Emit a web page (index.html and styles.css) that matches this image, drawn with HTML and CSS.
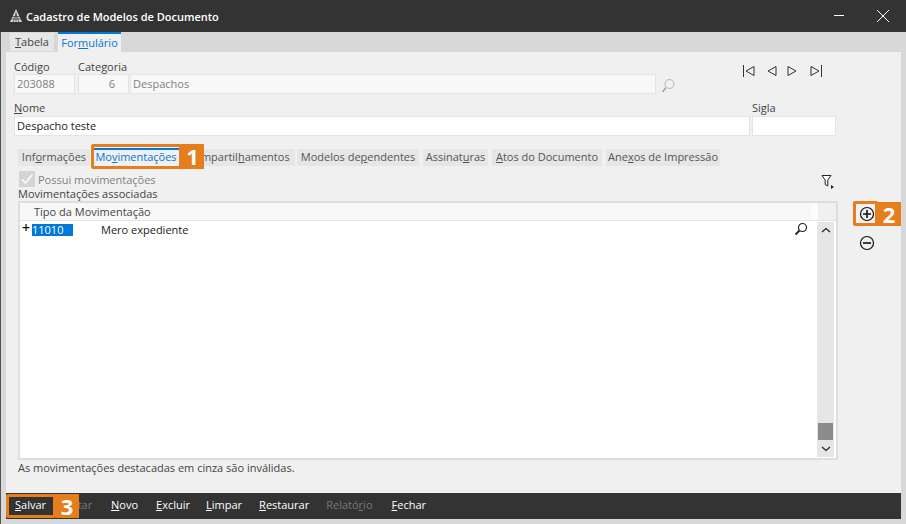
FILE: index.html
```html
<!DOCTYPE html>
<html lang="pt">
<head>
<meta charset="utf-8">
<title>Cadastro de Modelos de Documento</title>
<link rel="stylesheet" href="styles.css">
</head>
<body>
<div class="window">
  <header class="titlebar">
    <svg class="logo" width="16" height="16" viewBox="0 0 16 16"><path d="M8 1 L14 14 H2 Z" fill="#d8d8d8"/><path d="M8 4V14M5 14L8 6L11 14M3 11H13M4 8.500H12" stroke="#333" stroke-width=".7" fill="none"/></svg>
    <span class="title">Cadastro de Modelos de Documento</span>
    <svg class="win-min" width="12" height="12" viewBox="0 0 12 12"><path d="M1 5.500H11" stroke="#fff"/></svg>
    <svg class="win-close" width="14" height="14" viewBox="0 0 14 14"><path d="M1 1L13 13M13 1L1 13" stroke="#fff"/></svg>
  </header>
  <nav class="top-tabs">
    <span class="top-tab"><u>T</u>abela</span>
    <span class="top-tab active">For<u>m</u>ulário</span>
  </nav>
  <main class="panel">
    <div class="row first-row">
      <div class="field f-code"><label>Código</label><div class="input ro">203088</div></div>
      <div class="field f-cat"><label>Categoria</label><div class="input ro num">6</div></div>
      <div class="field f-desc"><label>&nbsp;</label><div class="input ro">Despachos</div></div>
      <svg class="lookup" width="14" height="16" viewBox="0 0 14 16"><circle cx="8.500" cy="6" r="4.500" fill="none" stroke="#b5b5b5"/><path d="M5 9.500L1.500 14" stroke="#a5a5a5" stroke-width="1.500"/></svg>
      <div class="nav-icons">
        <svg width="12" height="12" viewBox="0 0 12 12"><path d="M.5 0V12M11 1.500V10.500L3 6Z" fill="none" stroke="#333"/></svg>
        <svg class="nav-prev" width="10" height="12" viewBox="0 0 10 12"><path d="M9 1.500V10.500L1 6Z" fill="none" stroke="#333"/></svg>
        <svg class="nav-next" width="10" height="12" viewBox="0 0 10 12"><path d="M1 1.500V10.500L9 6Z" fill="none" stroke="#333"/></svg>
        <svg class="nav-last" width="12" height="12" viewBox="0 0 12 12"><path d="M11.500 0V12M1 1.500V10.500L9 6Z" fill="none" stroke="#333"/></svg>
      </div>
    </div>
    <div class="row second-row">
      <div class="field f-name"><label><u>N</u>ome</label><div class="input">Despacho teste</div></div>
      <div class="field f-sigla"><label>Si<u>g</u>la</label><div class="input"></div></div>
    </div>
    <div class="sub-tabs">
      <span class="sub-tab w1">Inf<u>o</u>rmações</span>
      <span class="sub-tab active w2">Mo<u>v</u>imentações</span>
      <span class="sub-tab w3">Compartil<u>h</u>amentos</span>
      <span class="sub-tab w4">Modelos de<u>p</u>endentes</span>
      <span class="sub-tab w5">Assinat<u>u</u>ras</span>
      <span class="sub-tab w6"><u>A</u>tos do Documento</span>
      <span class="sub-tab w7">Ane<u>x</u>os de Impressão</span>
    </div>
    <div class="content">
      <div class="left">
        <div class="check-row">
          <span class="check"><svg width="16" height="16" viewBox="0 0 16 16"><path d="M3 8.500L6.500 12L13 4" fill="none" stroke="#fff" stroke-width="1.500"/></svg></span>
          <span class="check-label">Possui movimentações</span>
          <svg class="filter" width="14" height="16" viewBox="0 0 14 16"><path d="M1 1.500H10L6.800 6V12L4.200 10.500V6Z" fill="#fff" stroke="#222"/><path d="M10 11V15L13 13Z" fill="#222"/></svg>
        </div>
        <div class="section-label">Movimentações associadas</div>
        <div class="grid-box">
          <div class="grid-head"><div class="head-wrap"><div class="head-title">Tipo da Movimentação</div></div></div>
          <div class="grid-body">
            <div class="grid-rows">
              <div class="grid-row">
                <span class="plus">+</span>
                <span class="cell-code">11010</span>
                <span class="cell-name">Mero expediente</span>
                <svg class="row-search" width="14" height="14" viewBox="0 0 14 14"><circle cx="8.500" cy="5.500" r="4" fill="none" stroke="#222" stroke-width="1.200"/><path d="M5.500 8.500L1.500 12.500" stroke="#222" stroke-width="1.800"/></svg>
              </div>
            </div>
            <div class="scrollbar">
              <svg width="16" height="16" viewBox="0 0 16 16"><path d="M4 10L8 6.500L12 10" fill="none" stroke="#222" stroke-width="1.200"/></svg>
              <div class="track"></div>
              <div class="thumb"></div>
              <svg width="16" height="16" viewBox="0 0 16 16"><path d="M4 6L8 9.500L12 6" fill="none" stroke="#222" stroke-width="1.200"/></svg>
            </div>
          </div>
        </div>
        <p class="note">As movimentações destacadas em cinza são inválidas.</p>
      </div>
      <aside class="side">
        <svg width="16" height="16" viewBox="0 0 16 16"><circle cx="8" cy="8" r="6.500" fill="none" stroke="#111" stroke-width="1.200"/><path d="M4 8H12M8 4V12" stroke="#111" stroke-width="1.600"/></svg>
        <svg class="side-minus" width="16" height="16" viewBox="0 0 16 16"><circle cx="8" cy="8" r="6.500" fill="none" stroke="#111" stroke-width="1.200"/><path d="M4 8H12" stroke="#111" stroke-width="1.600"/></svg>
      </aside>
    </div>
    <div class="mark mark-tab"></div><div class="badge badge-tab">1</div>
    <div class="mark mark-add"></div><div class="badge badge-add">2</div>
  </main>
  <footer class="toolbar">
    <span class="tool w-salvar"><u>S</u>alvar</span>
    <span class="tool disabled w-editar">Editar</span>
    <span class="tool w-novo"><u>N</u>ovo</span>
    <span class="tool w-excluir"><u>E</u>xcluir</span>
    <span class="tool"><u>L</u>impar</span>
    <span class="tool"><u>R</u>estaurar</span>
    <span class="tool disabled w-relatorio">Relató<u>r</u>io</span>
    <span class="tool"><u>F</u>echar</span>
    <div class="mark mark-save"></div><div class="badge badge-save">3</div>
  </footer>
</div>
</body>
</html>
```
FILE: styles.css
```css
* { box-sizing: border-box; }
html, body { margin: 0; padding: 0; }
body { width: 906px; height: 524px; overflow: hidden; background: #d8d8d8; font-family: "Open Sans", "Noto Sans", sans-serif; font-size: 11px; color: #333; }
u { text-underline-offset: 1px; }
.window { display: flex; flex-direction: column; height: 524px; border-left: 1px solid #555; }

.titlebar { height: 32px; margin-left: -1px; background: #333; color: #fff; display: flex; align-items: center; padding-left: 8px; }
.logo { flex: none; }
.title { margin-left: 2px; font-weight: 600; font-size: 11px; flex: 1; }
.win-min { margin-right: 31px; }
.win-close { margin-right: 16px; }

.top-tabs { height: 20px; display: flex; align-items: flex-end; padding-left: 9px; gap: 4px; }
.top-tab { width: 44px; height: 18px; margin-bottom: 1px; background: #e6e6e6; text-align: center; line-height: 18px; color: #444; }
.top-tab.active { width: 63px; height: 20px; margin-bottom: 0; background: #f0f0f0; border-top: 2px solid #0078d7; color: #0078d7; line-height: 17px; }

.panel { position: relative; height: 441px; margin: 0 5px 0 5px; background: #f0f0f0; padding: 0 0 0 8px; }
.row { display: flex; }
.first-row { height: 42px; padding-top: 7px; }
.second-row { height: 42px; padding-top: 6px; gap: 2px; }
.field { display: flex; flex-direction: column; }
.field label { height: 15px; line-height: 16px; color: #444; }
.second-row .field label { height: 16px; line-height: 15px; }
.input { height: 20px; background: #fff; border: 1px solid #e4e4e4; padding: 0 2px; line-height: 18px; color: #222; white-space: nowrap; }
.input.ro { background: #f8f8f8; color: #808080; }
.input.num { text-align: right; padding-right: 13px; }
.f-code { width: 61px; margin-right: 3px; }
.f-cat { width: 51px; margin-right: 1px; }
.f-desc { width: 526px; }
.lookup { margin: 19px 0 0 5px; }
.nav-icons { display: flex; align-items: center; height: 12px; margin: 6px 0 0 68px; }
.nav-prev { margin-left: 12px; }
.nav-next { margin-left: 10px; }
.nav-last { margin-left: 13px; }
.f-name { width: 736px; }
.f-sigla { width: 84px; }

.sub-tabs { display: flex; height: 18px; margin: 12px 0 0 4px; }
.sub-tab { height: 17px; margin-top: 1px; line-height: 16px; background: #e6e6e6; color: #555; text-align: center; white-space: nowrap; }
.sub-tab.active { height: 18px; margin-top: 0; background: #f0f0f0; border-top: 2px solid #0078d7; color: #0078d7; line-height: 14px; }
.w1 { width: 72px; margin-right: 2px; }
.w2 { width: 88px; margin-right: 2px; }
.w3 { width: 113px; margin-right: 2px; }
.w4 { width: 122px; margin-right: 4px; }
.w5 { width: 65px; margin-right: 4px; }
.w6 { width: 110px; margin-right: 4px; }
.w7 { width: 114px; }

.content { display: flex; margin-left: 4px; }
.left { width: 820px; }
.check-row { display: flex; align-items: center; height: 21px; padding: 5px 0 0 1px; position: relative; }
.check { width: 16px; height: 16px; background: #d5d5d5; display: block; }
.check svg { display: block; }
.check-label { margin-left: 3px; color: #808080; }
.filter { margin-left: auto; margin-right: 3px; margin-top: 5px; }
.section-label { height: 14px; line-height: 14px; color: #444; }
.grid-box { height: 259px; border: 2px solid #dedede; background: #fff; display: flex; flex-direction: column; }
.grid-head { height: 17px; background: #f0f0f0; flex: none; }
.head-wrap { width: 798px; height: 17px; background: #fcfcfc; }
.head-title { width: 791px; height: 17px; background: #f8f8f8; padding-left: 14px; line-height: 18px; color: #444; }
.grid-body { flex: 1; display: flex; border-top: 1px solid #e4e4e4; }
.grid-rows { flex: 1; min-width: 0; }
.grid-row { display: flex; align-items: center; height: 16px; color: #222; }
.plus { width: 10px; margin-left: 2px; font-size: 14px; line-height: 13px; font-weight: 600; color: #111; margin-top: -3px; }
.cell-code { width: 41px; height: 12px; line-height: 12px; align-self: flex-start; margin-top: 3px; background: #0078d7; color: #fff; }
.cell-name { margin-left: 28px; flex: 1; }
.row-search { margin-right: 9px; }
.scrollbar { flex: none; width: 17px; margin: 1px 2px 1px 0; background: #e6e6e6; display: flex; flex-direction: column; }
.scrollbar svg { flex: none; margin: 0 auto; }
.track { flex: 1; }
.thumb { flex: none; width: 15px; height: 17px; margin: 0 auto 1px; background: #8c8c8c; }
.note { margin: 1px 0 0; line-height: 14px; color: #444; }

.side { display: flex; flex-direction: column; margin: 0 0 0 21px; padding-top: 40px; }
.side-minus { margin-top: 13px; }

.toolbar { position: relative; height: 26px; margin: 0 5px 0 5px; background: #333; display: flex; align-items: center; padding: 0 0 3px 9px; color: #fff; }
.tool { margin-right: 17px; white-space: nowrap; }
.tool.disabled { color: #777; }
.w-salvar { margin-right: 16px; }
.w-editar { width: 32px; }
.w-novo { margin-right: 18px; }
.w-excluir { margin-right: 16px; }
.w-relatorio { margin-right: 19px; }

.mark { position: absolute; border: 3px solid #e67e1e; border-radius: 2px; }
.badge { position: absolute; background: #e67e1e; color: #fff; font-weight: 700; font-size: 22px; text-align: center; line-height: 24px; font-family: "Open Sans", sans-serif; }
.mark-tab { left: 85px; top: 92px; width: 91px; height: 25px; }
.badge-tab { left: 175px; top: 92px; width: 23px; height: 25px; }
.mark-add { left: 847px; top: 149px; width: 25px; height: 25px; }
.badge-add { left: 871px; top: 150px; width: 24px; height: 24px; }
.mark-save { left: 0; top: 1px; width: 50px; height: 24px; }
.badge-save { left: 49px; top: 1px; width: 24px; height: 24px; }
```
